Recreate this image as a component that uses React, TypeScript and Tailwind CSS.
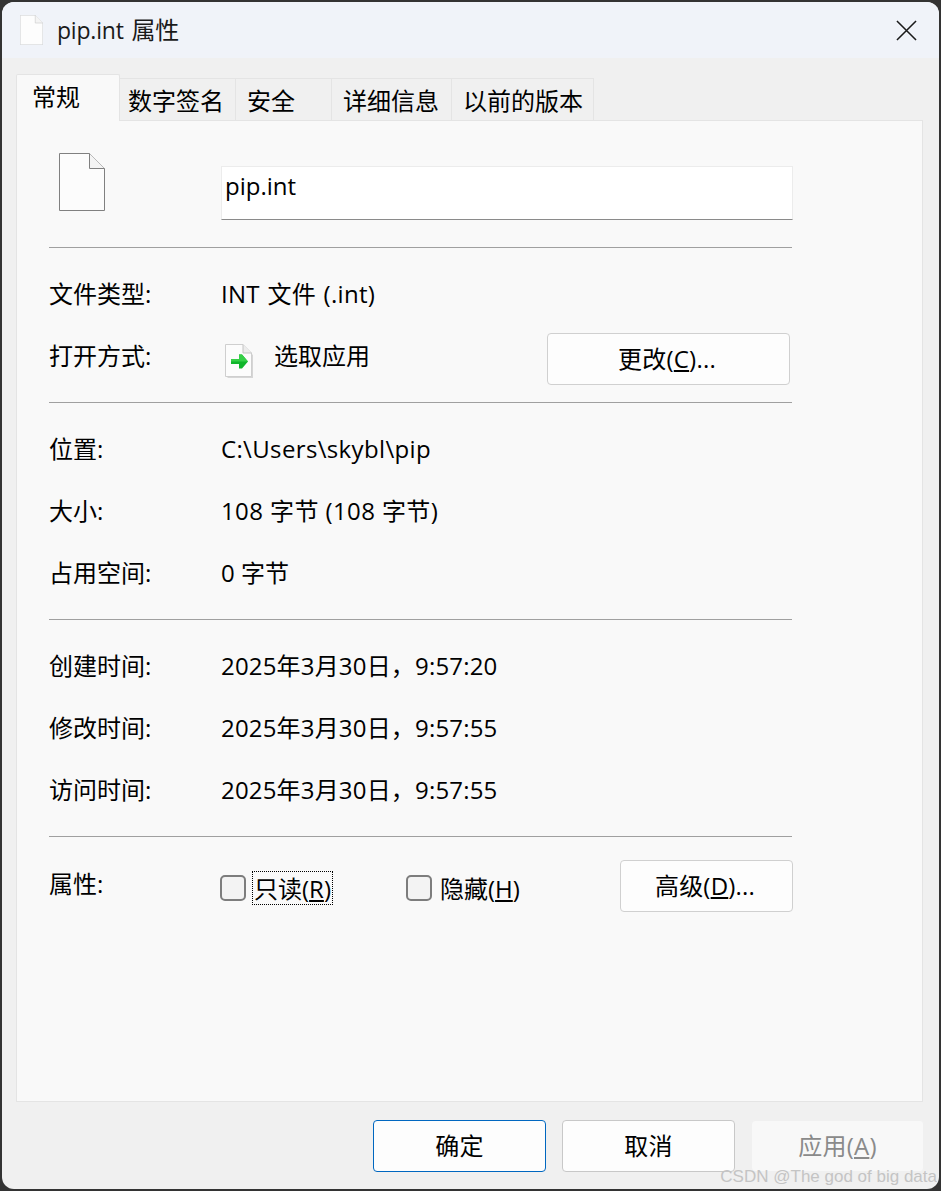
import * as React from 'react';

const FONT = "font-['Open_Sans','Noto_Sans_CJK_SC',sans-serif]";

function FileIcon({ className, stroke, fill }: { className: string; stroke: string; fill: string }) {
  return (
    <svg className={className} viewBox="0 0 46 58" fill="none" preserveAspectRatio="none">
      <path d="M0.5 0.5H30.5L45.5 15.5V57.5H0.5Z" fill={fill} stroke={stroke} />
      <path d="M30.5 0.5V15.5H45.5" fill="#f4f4f4" stroke={stroke} />
    </svg>
  );
}

function OpenWithIcon() {
  return (
    <svg className="ml-[3px] mt-[8px] w-[30px] h-[35px]" viewBox="0 0 30 35" fill="none">
      <path d="M3.5 3.5H20L29 12V35H3.5Z" fill="#d6d6d6" />
      <path d="M1.5 1.5H19L27.5 10V33.5H1.5Z" fill="#fcfcfc" stroke="#cfcfcf" />
      <path d="M19 1.5V10H27.5" fill="#ececec" stroke="#c4c4c4" />
      <path d="M7 16H15V11.5H18L24 18.5L18 25.5H15V21H7Z" fill="#0fb52a" />
      <path d="M15 11.5H18L24 18.5H7V16H15Z" fill="#35cf47" />
    </svg>
  );
}

function Row({ label, children }: { label: string; children: React.ReactNode }) {
  return (
    <div className="flex items-center h-[62px]">
      <div className="w-[172px] shrink-0 tracking-normal">{label}</div>
      <div className="flex-1 flex items-center">{children}</div>
    </div>
  );
}

function Separator() {
  return <div className="h-px bg-[#a0a0a0]" />;
}

function PanelButton({ className, children }: { className: string; children: React.ReactNode }) {
  return (
    <button className={`h-[52px] pr-[3px] tracking-[0.2px] bg-[#fdfdfd] border border-[#d0d0d0] rounded-[4px] ${className}`}>
      {children}
    </button>
  );
}

function Checkbox({ children, focused }: { children: React.ReactNode; focused?: boolean }) {
  return (
    <label className="flex items-center mt-[8px]">
      <span className="w-[26px] h-[26px] rounded-[5px] bg-[#f3f3f3] border-2 border-[#7d7d7d]" />
      <span
        className={`ml-[7px] h-[32px] px-px leading-[33px] ${
          focused ? 'outline-1 outline-dotted outline-black' : ''
        }`}
      >
        {children}
      </span>
    </label>
  );
}

const TABS = [
  { label: '数字签名', className: 'w-[116px] pl-[8px]' },
  { label: '安全', className: 'w-[96px] pl-[11px]' },
  { label: '详细信息', className: 'w-[120px] pl-[11px]' },
  { label: '以前的版本', className: 'w-[142px] pl-[11px]' },
];

export default function App() {
  return (
    <div className={`w-[941px] h-[1191px] bg-[#333333] p-[2px] overflow-hidden relative text-[24px] text-black ${FONT}`}>
      <div className="h-full flex flex-col rounded-[12px] overflow-hidden bg-[#f0f0f0]">
        {/* title bar */}
        <div className="h-[56px] shrink-0 bg-[#f0f3f9] flex items-center pl-[18px] pr-[22px]">
          <FileIcon className="w-[23px] h-[30px]" stroke="#c4c4c4" fill="#fdfdfd" />
          <span className="ml-[14px] -mt-[1px] text-[23px] tracking-[-0.2px] [word-spacing:2px] text-[#1a1a1a]">
            pip.int <span className="text-[24px]">属性</span>
          </span>
          <svg className="ml-auto w-[21px] h-[21px]" viewBox="0 0 22 22" fill="none">
            <path d="M1 1L21 21M21 1L1 21" stroke="#1a1a1a" strokeWidth="1.6" />
          </svg>
        </div>

        <div className="flex-1 flex flex-col pl-[14px] pr-[16px]">
          {/* tabs */}
          <div className="flex items-end h-[47px] mt-[16px] relative z-10 -mb-px">
            <div className="w-[104px] h-[47px] bg-[#f9f9f9] border border-[#e4e4e4] border-b-0 rounded-t-[2px] pl-[15px] leading-[43px]">
              常规
            </div>
            {TABS.map((tab) => (
              <div
                key={tab.label}
                className={`${tab.className} h-[43px] border border-l-0 border-[#e4e4e4] bg-[#f0f0f0] leading-[43px]`}
              >
                {tab.label}
              </div>
            ))}
          </div>

          {/* general panel */}
          <div className="h-[982px] bg-[#f9f9f9] border border-[#e4e4e4] pl-[32px] pr-[130px]">
            <div className="h-[126px] flex pt-[32px]">
              <div className="w-[172px] pl-[10px]">
                <FileIcon className="w-[46px] h-[58px]" stroke="#808080" fill="#fcfcfc" />
              </div>
              <div className="flex-1 -mr-px mt-[13px] h-[54px] bg-white border border-[#ececec] border-b-[#8a8a8a] pl-[3px] leading-[38px]">
                pip.int
              </div>
            </div>
            <Separator />

            <div className="pt-[15px] pb-[15px]">
              <Row label="文件类型:">
                <span className="tracking-[0.3px] [word-spacing:1px]">INT 文件 (.int)</span>
              </Row>
              <Row label="打开方式:">
                <OpenWithIcon />
                <span className="ml-[20px]">选取应用</span>
                <PanelButton className="ml-auto w-[243px] mt-[6px] mr-[2px]">
                  更改(<span className="underline">C</span>)...
                </PanelButton>
              </Row>
            </div>
            <Separator />

            <div className="pt-[15px] pb-[15px]">
              <Row label="位置:">
                <span className="tracking-[0.35px]">C:\Users\skybl\pip</span>
              </Row>
              <Row label="大小:">
                <span className="tracking-[0.4px]">108 字节 (108 字节)</span>
              </Row>
              <Row label="占用空间:">0 字节</Row>
            </div>
            <Separator />

            <div className="pt-[15px] pb-[15px] tracking-[0.18px]">
              <Row label="创建时间:">2025年3月30日，9:57:20</Row>
              <Row label="修改时间:">2025年3月30日，9:57:55</Row>
              <Row label="访问时间:">2025年3月30日，9:57:55</Row>
            </div>
            <Separator />

            <div className="pt-[16px]">
              <Row label="属性:">
                <div className="w-[186px] -ml-[1px]">
                  <Checkbox focused>
                    只读(<span className="underline">R</span>)
                  </Checkbox>
                </div>
                <Checkbox>
                  隐藏(<span className="underline">H</span>)
                </Checkbox>
                <PanelButton className="ml-auto w-[173px] -mr-px mt-[4px]">
                  高级(<span className="underline">D</span>)...
                </PanelButton>
              </Row>
            </div>
          </div>

          {/* footer buttons */}
          <div className="flex justify-end gap-[16px] mt-[18px] -mr-[1px] tracking-[0.2px]">
            <button className="w-[173px] h-[52px] bg-[#fdfdfd] border border-[#0067c0] rounded-[4px]">确定</button>
            <button className="w-[173px] h-[52px] bg-[#fdfdfd] border border-[#c8c8c8] rounded-[4px]">取消</button>
            <button className="w-[173px] h-[52px] bg-[#f8f8f8] border border-[#f0f0f0] rounded-[4px] text-[#8a8a8a]">
              应用(<span className="underline">A</span>)
            </button>
          </div>
        </div>
      </div>

      {/* watermark */}
      <span className="absolute right-[4px] bottom-[4px] font-['Liberation_Sans',sans-serif] text-[17px] leading-[20px] text-[#c4c4c4]">
        CSDN @The god of big data
      </span>
    </div>
  );
}
